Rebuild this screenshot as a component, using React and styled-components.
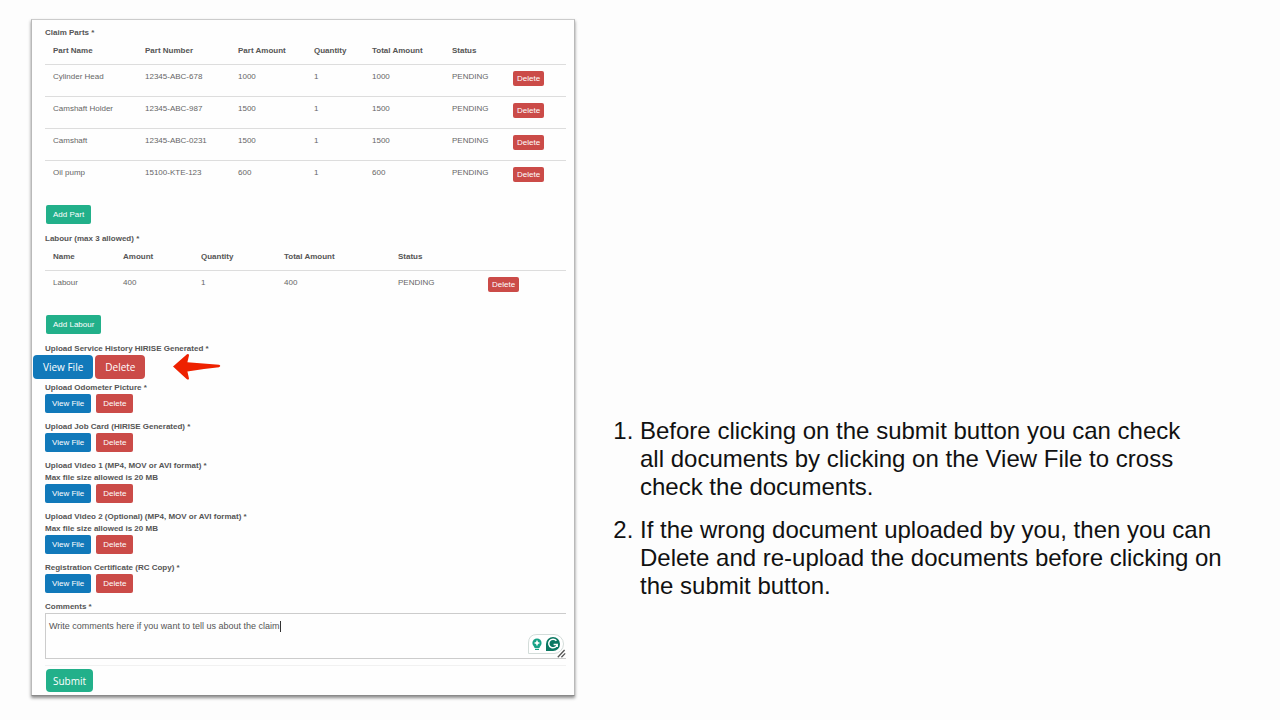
import React from 'react';
import styled, {createGlobalStyle} from 'styled-components';

const parts = [
    {name: 'Cylinder Head', number: '12345-ABC-678', amount: 1000, quantity: 1, total: 1000, status: 'PENDING'},
    {name: 'Camshaft Holder', number: '12345-ABC-987', amount: 1500, quantity: 1, total: 1500, status: 'PENDING'},
    {name: 'Camshaft', number: '12345-ABC-0231', amount: 1500, quantity: 1, total: 1500, status: 'PENDING'},
    {name: 'Oil pump', number: '15100-KTE-123', amount: 600, quantity: 1, total: 600, status: 'PENDING'},
];

const labour = [
    {name: 'Labour', amount: 400, quantity: 1, total: 400, status: 'PENDING'},
];

const partColumns = [
    {key: 'name', title: 'Part Name', width: 92},
    {key: 'number', title: 'Part Number', width: 93},
    {key: 'amount', title: 'Part Amount', width: 76},
    {key: 'quantity', title: 'Quantity', width: 58},
    {key: 'total', title: 'Total Amount', width: 80},
    {key: 'status', title: 'Status', width: 61},
];

const labourColumns = [
    {key: 'name', title: 'Name', width: 70},
    {key: 'amount', title: 'Amount', width: 78},
    {key: 'quantity', title: 'Quantity', width: 83},
    {key: 'total', title: 'Total Amount', width: 114},
    {key: 'status', title: 'Status', width: 90},
];

const uploads = [
    {title: 'Upload Odometer Picture *'},
    {title: 'Upload Job Card (HIRISE Generated) *'},
    {title: 'Upload Video 1 (MP4, MOV or AVI format) *', hint: 'Max file size allowed is 20 MB'},
    {title: 'Upload Video 2 (Optional) (MP4, MOV or AVI format) *', hint: 'Max file size allowed is 20 MB'},
    {title: 'Registration Certificate (RC Copy) *'},
];

const ClaimTable = ({columns, rows, lastWidth, label}) => (
    <Table aria-label={label}>
        <colgroup>
            {columns.map(c => <Col key={c.key} $width={c.width}/>)}
            <Col $width={lastWidth}/>
        </colgroup>
        <thead>
            <tr>
                {columns.map(c => <th key={c.key}>{c.title}</th>)}
                <th/>
            </tr>
        </thead>
        <tbody>
            {rows.map(row => (
                <tr key={row.name}>
                    {columns.map(c => <td key={c.key}>{row[c.key]}</td>)}
                    <td><Button type="button" $color="red" $size="tiny">Delete</Button></td>
                </tr>
            ))}
        </tbody>
    </Table>
);

const Arrow = () => (
    <ArrowIcon viewBox="0 0 50 28" aria-hidden="true">
        <path
            d="M1 13.5 L15 1.2 Q17 .6 17 2.4 L15.4 9.2 L47 11.8 Q49.5 13 47 14.2 L32 16 L15.4 18.6 L17 25.4 Q16.6 27.4 14.6 26 Z"
            fill="#ee2100"
        />
    </ArrowIcon>
);

const Assistant = () => (
    <AssistantIcon viewBox="0 0 36 20" aria-hidden="true">
        <path d="M.5 19.5 V9 Q.5 .5 9 .5 H26 A9.5 9.5 0 0 1 26 19.5 Z" fill="#fff" stroke="#d3dcd9"/>
        <circle cx="9" cy="9" r="4.6" fill="#16a286"/>
        <path d="M6.4 11 H11.6 V14 H6.4 Z M7 14.8 H11 V16 H7 Z" fill="#16a286"/>
        <path d="M9 5.8 L10 8 L12.2 9 L10 10 L9 12.2 L8 10 L5.8 9 L8 8 Z" fill="#fff"/>
        <path d="M18 10 A7 7 0 1 1 25 17 H18 Z" fill="#0b7862"/>
        <path d="M28.4 6.8 A4.3 4.3 0 1 0 29.2 10.6 H25.6 M29.2 10.6 V13" fill="none" stroke="#fff" strokeWidth="1.5"/>
    </AssistantIcon>
);

const Grip = () => (
    <GripIcon viewBox="0 0 9 9" aria-hidden="true">
        <path d="M.8 8.2 L7.6 1 M4.4 8.2 L8.2 4.4" stroke="#555" strokeWidth="1.3" fill="none"/>
    </GripIcon>
);

const App = () => (
    <Page>
        <GlobalStyle/>
        <Card onSubmit={e => e.preventDefault()}>
            <Title>Claim Parts *</Title>
            <ClaimTable columns={partColumns} rows={parts} lastWidth={61} label="Claim Parts"/>
            <AddRow><Button type="button" $color="green">Add Part</Button></AddRow>

            <Title>Labour (max 3 allowed) *</Title>
            <ClaimTable columns={labourColumns} rows={labour} lastWidth={86} label="Labour"/>
            <AddRow><Button type="button" $color="green">Add Labour</Button></AddRow>

            <Title>Upload Service History HIRISE Generated *</Title>
            <HighlightRow>
                <Button type="button" $color="blue" $size="large">View File</Button>
                <Button type="button" $color="red" $size="large">Delete</Button>
                <Arrow/>
            </HighlightRow>

            {uploads.map(u => (
                <Upload key={u.title}>
                    <Title>{u.title}</Title>
                    {u.hint && <Title>{u.hint}</Title>}
                    <ButtonRow>
                        <Button type="button" $color="blue">View File</Button>
                        <Button type="button" $color="red">Delete</Button>
                    </ButtonRow>
                </Upload>
            ))}

            <Title as="label" htmlFor="comments">Comments *</Title>
            <CommentBox>
                <Comment id="comments" defaultValue="Write comments here if you want to tell us about the claim"/>
                <Caret/>
                <Assistant/>
                <Grip/>
            </CommentBox>
            <Footer>
                <Button type="submit" $color="green" $size="submit">Submit</Button>
            </Footer>
        </Card>

        <Steps>
            <li>
                Before clicking on the submit button you can check<br/>
                all documents by clicking on the View File to cross<br/>
                check the documents.
            </li>
            <li>
                If the wrong document uploaded by you, then you can<br/>
                Delete and re-upload the documents before clicking on<br/>
                the submit button.
            </li>
        </Steps>
    </Page>
);

const GlobalStyle = createGlobalStyle`
    * {
        box-sizing: border-box;
    }

    body {
        margin: 0;
        background: #fdfdfd;
        font-family: "Liberation Sans", Arial, sans-serif;
    }
`

const Page = styled.main`
    display: flex;
    align-items: flex-start;
    padding: 19px 31px 23px;
`

const Card = styled.form`
    width: 42.5vw;
    flex: none;
    padding: 7px 8px 3px 13px;
    background: #fefefe;
    border: 1px solid #b9b9b9;
    border-top-color: #ccc;
    border-bottom-color: #8a8a8a;
    box-shadow: 0 2px 3px rgba(0, 0, 0, 0.45);
`

const Title = styled.div`
    display: block;
    font-size: 8px;
    line-height: 12px;
    font-weight: bold;
    color: #555;
`

const Table = styled.table`
    width: 100%;
    table-layout: fixed;
    border-collapse: separate;
    border-spacing: 0;
    font-size: 8px;
    line-height: 12px;
    color: #666;

    th {
        height: 25px;
        padding: 6px 0 6px 8px;
        text-align: left;
        vertical-align: top;
        color: #555;
        white-space: nowrap;
    }

    td {
        height: 32px;
        padding: 6px 0 6px 8px;
        border-top: 1px solid #ddd;
        vertical-align: top;
        white-space: nowrap;
    }
`

const Col = styled.col`
    width: ${p => p.$width}px;
`

const colors = {
    green: '#22b08a',
    blue: '#1179ba',
    red: '#cb4b48',
};

const sizes = {
    tiny: 'height: 15px; padding: 0 4px; font-size: 8px; border-radius: 2px;',
    normal: 'height: 19px; padding: 0 7px; font-size: 8px; border-radius: 2px;',
    submit: 'height: 23px; padding: 0 7px; font-size: 10px; border-radius: 4px;',
    large: 'height: 24px; padding: 0 10px; font-size: 10px; border-radius: 4px;',
};

const Button = styled.button`
    display: block;
    border: 0;
    color: #fff;
    background: ${p => colors[p.$color]};
    font-family: ${p => p.$size === 'large' || p.$size === 'submit' ? '"Open Sans", "Noto Sans", sans-serif' : 'inherit'};
    font-weight: normal;
    ${p => sizes[p.$size || 'normal']}
`

const AddRow = styled.div`
    padding: 13px 0 9px 1px;
`

const ButtonRow = styled.div`
    display: flex;
    gap: 5px;
`

const HighlightRow = styled.div`
    display: flex;
    align-items: center;
    gap: 2px;
    margin: 0 0 3px -12px;
`

const ArrowIcon = styled.svg`
    width: 50px;
    height: 28px;
    margin: -2px 0 -2px 25px;
`

const Upload = styled.section`
    margin-bottom: 8px;
`

const CommentBox = styled.div`
    position: relative;
    height: 46px;
    border-bottom: 1px solid #ccc;
`

const Comment = styled.textarea`
    display: block;
    width: 100%;
    height: 45px;
    padding: 6px 3px;
    border: 1px solid #ccc;
    border-width: 1px 0 0 1px;
    outline: none;
    resize: none;
    background: transparent;
    color: #555;
    font-family: inherit;
    font-size: 9px;
    line-height: 12px;
`

const Caret = styled.span`
    position: absolute;
    left: 235px;
    top: 8px;
    width: 1px;
    height: 11px;
    background: #333;
`

const AssistantIcon = styled.svg`
    position: absolute;
    right: 2px;
    bottom: 4px;
    width: 36px;
    height: 20px;
`

const GripIcon = styled.svg`
    position: absolute;
    right: 0;
    bottom: 0;
    width: 9px;
    height: 9px;
`

const Footer = styled.div`
    margin-top: 6px;
    padding: 3px 0 0 1px;
    border-top: 1px solid #f1f1f1;
`

const Steps = styled.ol`
    flex: 1;
    margin: 398px 0 0;
    padding-left: 65px;
    color: #111;
    font-size: 24px;
    line-height: 28px;

    li + li {
        margin-top: 15px;
    }
`

export default App;
